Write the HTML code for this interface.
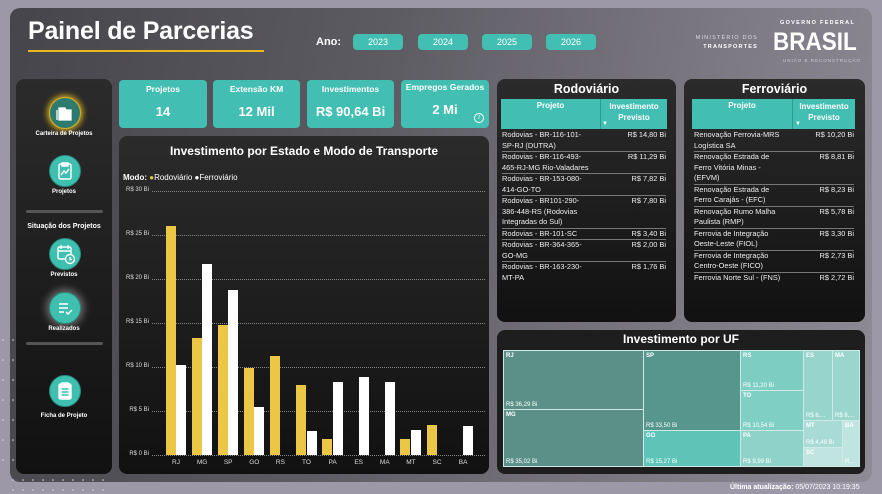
<!DOCTYPE html>
<html><head><meta charset="utf-8">
<style>
*{box-sizing:border-box;margin:0;padding:0}
body{width:882px;height:494px;background:#9d98a8;font-family:"Liberation Sans",sans-serif;position:relative;overflow:hidden;color:#fff}
.abs{position:absolute}
#main{left:10px;top:8px;width:862px;height:474px;border-radius:10px;background:linear-gradient(100deg,#46454b 0%,#5d5b62 40%,#7b7882 75%,#8f8b96 100%)}
.dark{background:linear-gradient(180deg,#2b2b2b,#111);border-radius:8px}
.btn{background:#42bfb2;border-radius:4px;font-size:9px;text-align:center;line-height:16px;width:50px;height:16px;top:34px}
.kpi{top:80px;height:48px;background:#42bfb2;border-radius:4px;text-align:center;font-weight:bold}
.kpi .t{font-size:8.5px;margin-top:4px}
.kpi .v{font-size:13px;margin-top:10px}
.circ{width:32px;height:32px;border-radius:50%;background:#3fbfb0;left:49px;border:1.5px solid #2a8c80}
.lbl{font-size:6px;font-weight:bold;width:96px;left:16px;text-align:center}
.hr{left:26px;width:77px;height:3px;background:#555;border-radius:2px}
.th{background:#42bfb2;font-size:8px;font-weight:bold;text-align:center}
.row{font-size:7.4px;line-height:10.5px;border-bottom:1.5px solid #777;display:flex;justify-content:space-between;color:#eee}
.row span:last-child{text-align:right;white-space:nowrap}
.tm{font-size:6px;font-weight:bold;padding:2px 2px;border:1px solid #cfe9e5}
.tm b{position:absolute;bottom:1px;left:2px;font-weight:normal}
.ax{font-size:6px;color:#ddd;left:121px;width:28px;text-align:right}
.grid{left:152px;width:333px;border-top:1px dotted #888}
.bar{width:10px}
.cat{font-size:6.5px;color:#ddd;width:20px;text-align:center;top:459px}
</style></head><body>
<div id="main" class="abs"></div>
<svg class="abs" style="left:0;top:330px" width="112" height="164">
<g fill="#d8d4e0">
<circle cx="3" cy="10" r=".8"/><circle cx="13" cy="10" r=".8"/><circle cx="3" cy="30" r=".8"/><circle cx="13" cy="30" r=".8"/><circle cx="3" cy="50" r=".8"/><circle cx="13" cy="50" r=".8"/><circle cx="3" cy="70" r=".8"/><circle cx="13" cy="70" r=".8"/><circle cx="3" cy="90" r=".8"/><circle cx="13" cy="90" r=".8"/><circle cx="3" cy="110" r=".8"/><circle cx="13" cy="110" r=".8"/><circle cx="3" cy="130" r=".8"/><circle cx="13" cy="130" r=".8"/>
<circle cx="13" cy="150" r=".8"/><circle cx="23" cy="150" r=".8"/><circle cx="33" cy="150" r=".8"/><circle cx="43" cy="150" r=".8"/><circle cx="53" cy="150" r=".8"/><circle cx="63" cy="150" r=".8"/><circle cx="73" cy="150" r=".8"/><circle cx="83" cy="150" r=".8"/><circle cx="93" cy="150" r=".8"/><circle cx="103" cy="150" r=".8"/>
<circle cx="13" cy="160" r=".8"/><circle cx="23" cy="160" r=".8"/><circle cx="33" cy="160" r=".8"/><circle cx="43" cy="160" r=".8"/><circle cx="53" cy="160" r=".8"/><circle cx="63" cy="160" r=".8"/><circle cx="73" cy="160" r=".8"/><circle cx="83" cy="160" r=".8"/><circle cx="93" cy="160" r=".8"/><circle cx="103" cy="160" r=".8"/>
</g></svg>

<div class="abs" style="left:28px;top:17px;font-size:25px;font-weight:bold;letter-spacing:-0.2px">Painel de Parcerias</div>
<div class="abs" style="left:28px;top:50px;width:236px;height:2px;background:#e8b820"></div>
<div class="abs" style="left:316px;top:36px;font-size:11px;font-weight:bold">Ano:</div>
<div class="abs btn" style="left:353px">2023</div>
<div class="abs btn" style="left:418px">2024</div>
<div class="abs btn" style="left:482px">2025</div>
<div class="abs btn" style="left:546px">2026</div>

<div class="abs" style="left:680px;top:34px;width:78px;text-align:right;font-size:5.5px;letter-spacing:1.2px;line-height:9px;color:#ddd">MINISTÉRIO DOS<br><b style="color:#fff">TRANSPORTES</b></div>
<div class="abs" style="left:780px;top:20px;font-size:5.5px;font-weight:bold;letter-spacing:1.3px">GOVERNO FEDERAL</div>
<div class="abs" style="left:773px;top:29px;font-size:25px;font-weight:900;line-height:26px;transform:scaleX(0.9);transform-origin:left">BRASIL</div>
<div class="abs" style="left:783px;top:58px;font-size:4.5px;letter-spacing:1px;color:#ccc">UNIÃO E RECONSTRUÇÃO</div>

<div class="abs dark" style="left:16px;top:79px;width:96px;height:395px"></div>
<div class="abs circ" style="top:97px;background:#2d7b6f;box-shadow:0 0 6px 2px #c9a520;border-color:#d4b030"></div>
<div class="abs circ" style="top:155px"></div>
<div class="abs circ" style="top:238px"></div>
<div class="abs circ" style="top:292px;box-shadow:0 0 8px 3px rgba(255,255,255,.35)"></div>
<div class="abs circ" style="top:375px"></div>
<svg class="abs" style="left:49px;top:97px" width="32" height="32" fill="none" stroke="#fff" stroke-width="1.3"><path d="M10 11h6l1 2h5v10H10z" fill="#fff"/><path d="M8 13v10"/></svg>
<svg class="abs" style="left:49px;top:155px" width="32" height="32" fill="none" stroke="#fff" stroke-width="1.4"><rect x="10" y="9" width="12" height="15" rx="1.5"/><path d="M13 8h6v3h-6z" fill="#fff"/><path d="M12 20l3-4 2 2 3-4"/></svg>
<svg class="abs" style="left:49px;top:238px" width="32" height="32" fill="none" stroke="#fff" stroke-width="1.4"><rect x="9" y="9" width="13" height="12" rx="1.5"/><path d="M9 13h13M12 7v4M19 7v4"/><circle cx="21" cy="21" r="4.5" fill="#3fbfb0"/><path d="M21 19v2.5h2"/></svg>
<svg class="abs" style="left:49px;top:292px" width="32" height="32" fill="none" stroke="#fff" stroke-width="1.5"><path d="M10 12h9M10 16h9M10 20h5M17 20l2 2 4-4"/></svg>
<svg class="abs" style="left:49px;top:375px" width="32" height="32" fill="none" stroke="#fff" stroke-width="1.4"><rect x="10" y="9" width="12" height="15" rx="1.5" fill="#fff"/><path d="M13 8h6v3h-6z" fill="#fff"/><path d="M12.5 14h7M12.5 17h7M12.5 20h7" stroke="#3fbfb0"/></svg>
<div class="abs lbl" style="top:131px">Carteira de Projetos</div>
<div class="abs lbl" style="top:189px">Projetos</div>
<div class="abs hr" style="top:210px"></div>
<div class="abs lbl" style="top:223px;font-size:7px">Situação dos Projetos</div>
<div class="abs lbl" style="top:272px">Previstos</div>
<div class="abs lbl" style="top:326px">Realizados</div>
<div class="abs hr" style="top:342px"></div>
<div class="abs lbl" style="top:413px">Ficha de Projeto</div>

<div class="abs kpi" style="left:119px;width:88px"><div class="t">Projetos</div><div class="v">14</div></div>
<div class="abs kpi" style="left:213px;width:87px"><div class="t">Extensão KM</div><div class="v">12 Mil</div></div>
<div class="abs kpi" style="left:307px;width:87px"><div class="t">Investimentos</div><div class="v">R$ 90,64 Bi</div></div>
<div class="abs kpi" style="left:401px;width:88px"><div class="t" style="margin-top:2px">Empregos Gerados</div><div class="v" style="margin-top:10px">2 Mi</div></div>
<div class="abs" style="left:474px;top:113px;width:10px;height:10px;border:1px solid #fff;border-radius:50%;font-size:7px;text-align:center;line-height:8px;font-style:italic">i</div>

<div class="abs dark" style="left:119px;top:136px;width:370px;height:338px"></div>
<div class="abs" style="left:119px;top:144px;width:370px;text-align:center;font-size:12px;font-weight:bold">Investimento por Estado e Modo de Transporte</div>
<div class="abs" style="left:123px;top:173px;font-size:8px"><b>Modo:</b> <span style="color:#e8c440">●</span>Rodoviário <span>●</span>Ferroviário</div>
<div id="chart"></div>
<script>
var c=document.getElementById('chart'),h='';
for(var i=0;i<=6;i++){var y=455-i*44;h+='<div class="abs ax" style="top:'+(y-4)+'px">R$ '+(i*5)+' Bi</div><div class="abs grid" style="top:'+y+'px"></div>';}
var d=[['RJ',26,10.2],['MG',13.3,21.7],['SP',14.8,18.7],['GO',9.9,5.4],['RS',11.2,0],['TO',7.9,2.7],['PA',1.8,8.3],['ES',0,8.9],['MA',0,8.3],['MT',1.8,2.8],['SC',3.4,0],['BA',0,3.3]];
d.forEach(function(r,k){var x=176+k*26.1;
if(r[1])h+='<div class="abs bar" style="background:#ecc745;left:'+(x-10.5)+'px;top:'+(455-r[1]*8.8)+'px;height:'+(r[1]*8.8)+'px"></div>';
if(r[2])h+='<div class="abs bar" style="background:#fff;left:'+x+'px;top:'+(455-r[2]*8.8)+'px;height:'+(r[2]*8.8)+'px"></div>';
h+='<div class="abs cat" style="left:'+(x-10)+'px">'+r[0]+'</div>';});
c.innerHTML=h;
</script>

<div class="abs dark" style="left:497px;top:79px;width:179px;height:243px"></div>
<div class="abs" style="left:497px;top:82px;width:179px;text-align:center;font-size:12.5px;font-weight:bold">Rodoviário</div>
<div class="abs th" style="left:501px;top:99px;width:166px;height:30px"><div class="abs" style="left:0;top:2px;width:99px">Projeto</div><div class="abs" style="left:99px;top:0;width:1px;height:30px;background:#2f9b8f"></div><div class="abs" style="left:100px;top:2px;width:66px;line-height:11px">Investimento<br>Previsto</div><div class="abs" style="left:101px;top:22px;font-size:6px">▼</div></div>
<div class="abs" style="left:502px;top:130px;width:164px">
<div class="row"><span>Rodovias - BR-116-101-<br>SP-RJ (DUTRA)</span><span>R$ 14,80 Bi</span></div>
<div class="row"><span>Rodovias - BR-116-493-<br>465-RJ-MG Rio-Valadares</span><span>R$ 11,29 Bi</span></div>
<div class="row"><span>Rodovias - BR-153-080-<br>414-GO-TO</span><span>R$ 7,82 Bi</span></div>
<div class="row"><span>Rodovias - BR101-290-<br>386-448-RS (Rodovias<br>Integradas do Sul)</span><span>R$ 7,80 Bi</span></div>
<div class="row"><span>Rodovias - BR-101-SC</span><span>R$ 3,40 Bi</span></div>
<div class="row"><span>Rodovias - BR-364-365-<br>GO-MG</span><span>R$ 2,00 Bi</span></div>
<div class="row" style="border:0"><span>Rodovias - BR-163-230-<br>MT-PA</span><span>R$ 1,76 Bi</span></div>
</div>

<div class="abs dark" style="left:684px;top:79px;width:181px;height:243px"></div>
<div class="abs" style="left:684px;top:82px;width:181px;text-align:center;font-size:12.5px;font-weight:bold">Ferroviário</div>
<div class="abs th" style="left:692px;top:99px;width:163px;height:30px"><div class="abs" style="left:0;top:2px;width:100px">Projeto</div><div class="abs" style="left:100px;top:0;width:1px;height:30px;background:#2f9b8f"></div><div class="abs" style="left:101px;top:2px;width:62px;line-height:11px">Investimento<br>Previsto</div><div class="abs" style="left:103px;top:22px;font-size:6px">▼</div></div>
<div class="abs" style="left:694px;top:130px;width:160px">
<div class="row"><span>Renovação Ferrovia-MRS<br>Logística SA</span><span>R$ 10,20 Bi</span></div>
<div class="row"><span>Renovação Estrada de<br>Ferro Vitória Minas -<br>(EFVM)</span><span>R$ 8,81 Bi</span></div>
<div class="row"><span>Renovação Estrada de<br>Ferro Carajás - (EFC)</span><span>R$ 8,23 Bi</span></div>
<div class="row"><span>Renovação Rumo Malha<br>Paulista (RMP)</span><span>R$ 5,78 Bi</span></div>
<div class="row"><span>Ferrovia de Integração<br>Oeste-Leste (FIOL)</span><span>R$ 3,30 Bi</span></div>
<div class="row"><span>Ferrovia de Integração<br>Centro-Oeste (FICO)</span><span>R$ 2,73 Bi</span></div>
<div class="row" style="border:0"><span>Ferrovia Norte Sul - (FNS)</span><span>R$ 2,72 Bi</span></div>
</div>

<div class="abs dark" style="left:497px;top:330px;width:368px;height:144px;background:#1e1e1e"></div>
<div class="abs" style="left:497px;top:332px;width:368px;text-align:center;font-size:12px;font-weight:bold">Investimento por UF</div>
<div class="abs tm" style="left:503px;top:350px;width:141px;height:60px;background:#5a9087">RJ<b>R$ 36,29 Bi</b></div>
<div class="abs tm" style="left:503px;top:409px;width:141px;height:58px;background:#5a9087">MG<b>R$ 35,02 Bi</b></div>
<div class="abs tm" style="left:643px;top:350px;width:98px;height:81px;background:#57968c">SP<b>R$ 33,50 Bi</b></div>
<div class="abs tm" style="left:643px;top:430px;width:98px;height:37px;background:#5ec4b8">GO<b>R$ 15,27 Bi</b></div>
<div class="abs tm" style="left:740px;top:350px;width:64px;height:41px;background:#7ecdc3">RS<b>R$ 11,20 Bi</b></div>
<div class="abs tm" style="left:740px;top:390px;width:64px;height:41px;background:#80cfc5">TO<b>R$ 10,54 Bi</b></div>
<div class="abs tm" style="left:740px;top:430px;width:64px;height:37px;background:#8fd2c9">PA<b>R$ 9,99 Bi</b></div>
<div class="abs tm" style="left:803px;top:350px;width:30px;height:71px;background:#96d4cc">ES<b>R$ 8,...</b></div>
<div class="abs tm" style="left:832px;top:350px;width:28px;height:71px;background:#9bd6ce">MA<b>R$ 8,...</b></div>
<div class="abs tm" style="left:803px;top:420px;width:40px;height:28px;background:#a8dbd5">MT<b>R$ 4,49 Bi</b></div>
<div class="abs tm" style="left:803px;top:447px;width:40px;height:20px;background:#c0e4df">SC</div>
<div class="abs tm" style="left:842px;top:420px;width:18px;height:47px;background:#c0e4df">BA<b>R...</b></div>

<div class="abs" style="left:730px;top:484px;font-size:7px;color:#fff"><b>Última atualização:</b> 05/07/2023 10:19:35</div>
</body></html>
